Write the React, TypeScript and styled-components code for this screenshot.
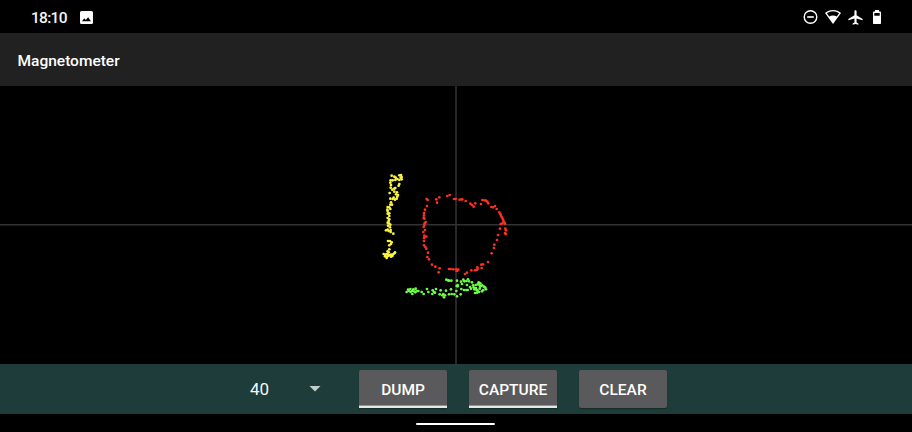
import React from "react";
import styled, { createGlobalStyle } from "styled-components";

const GlobalStyle = createGlobalStyle`
  html, body { margin: 0; padding: 0; background: #000; }
  body { font-family: Roboto, sans-serif; color: #fff; overflow: hidden; }
`;

const Screen = styled.main`
  display: grid;
  grid-template-rows: 33px 53px 278px 50px 18px;
  width: 912px;
  height: 432px;
  background: #000;
`;

const StatusBar = styled.div`
  display: flex;
  align-items: center;
  justify-content: space-between;
  padding: 2px 28px 0 31px;
  box-sizing: border-box;
`;

const StatusLeft = styled.div`
  display: flex;
  align-items: center;
  gap: 13px;
`;

const StatusRight = styled.div`
  display: flex;
  align-items: center;
  gap: 7px;
`;

const Clock = styled.span`
  width: 36px;
  font: 500 15.5px/18px Roboto, sans-serif;
  letter-spacing: -0.7px;
  white-space: nowrap;
  color: #f4f4f4;
`;

const Glyph = styled.svg`
  display: block;
  flex: none;
  fill: #fff;
`;

const AppBar = styled.header`
  display: flex;
  align-items: center;
  padding: 2px 17.5px 0;
  background: #212121;
`;

const Title = styled.h1`
  margin: 0;
  font: 500 15.5px/20px Roboto, sans-serif;
  color: #fff;
`;

const Plot = styled.svg`
  display: block;
  width: 912px;
  height: 278px;
  background: #000;
`;

const Controls = styled.div`
  display: flex;
  align-items: center;
  padding-left: 250px;
  background: #1e3c39;
`;

const Picker = styled.div`
  display: flex;
  align-items: center;
  justify-content: space-between;
  width: 71px;
  margin-right: 38px;
  padding-bottom: 1px;
  font: 400 17px/20px Roboto, sans-serif;
  color: #f5f7f7;
`;

const Actions = styled.div`
  display: flex;
  gap: 22px;
`;

const Action = styled.button<{ $active?: boolean }>`
  width: 88px;
  height: 38px;
  padding: 2px 0 0;
  border: 0;
  border-radius: ${(p) => (p.$active ? "2px 2px 0 0" : "2px")};
  background: #5a595b;
  box-shadow: ${(p) =>
    p.$active
      ? "inset 0 -2px #e2e8e6, inset 0 -3px #929493, 0 1px 1px rgba(0,0,0,.25)"
      : "0 1px 1px rgba(0,0,0,.3)"};
  font: 500 15.5px/20px Roboto, sans-serif;
  color: #fff;
`;

const NavBar = styled.div`
  display: flex;
  padding: 9px 0 0 416px;
`;

const HomeHandle = styled.div`
  width: 79px;
  height: 2px;
  border-radius: 1px;
  background: #fff;
`;

type Patch = { x: number; y: number; points: string };
type Series = { color: string; patches: Patch[] };

// Each patch holds samples in thirds of a pixel, relative to its origin.
const series: Series[] = [
  {
    color: "#fbf63c",
    patches: [
      { x: 375, y: 165, points: "50,32 58,35 62,38 67,42 73,31 78,30 77,38 80,43 80,36 73,45 61,45 47,46 53,46 46,53 48,60 47,68 52,74 58,71 61,69 73,57 71,62 44,84 58,80 66,82 69,90 67,95 65,101 60,104 63,88 53,102 46,101 56,98 48,112 46,119 51,119 38,126 43,127 46,132 37,134 40,146" },
      { x: 375, y: 210, points: "38,3 38,11 43,10 43,18 38,24 43,28 41,33 38,38 42,40 46,44 39,47 45,52 38,59 33,61 41,63 47,60 47,66 55,71 39,93 45,93 50,97 48,102 43,106 43,118 38,124 41,127 26,132 31,134 35,132 38,133 44,135 48,134 54,133 58,130 60,127 30,139 35,140 35,144 40,138 48,140 52,138" },
    ],
  },
  {
    color: "#ff3020",
    patches: [
      { x: 415, y: 185, points: "35,42 38,45 36,63 30,74 27,84 27,91 26,98 28,101 32,111 29,115 28,120 26,126 30,135 25,141 64,43 66,53 73,37 97,33 104,30 117,42 122,42 134,44 141,43" },
      { x: 460, y: 185, points: "6,43 17,48 31,56 36,60 41,65 46,55 63,57 67,45 73,46 78,47 82,50 85,55 94,66 99,67 105,63 110,72 118,82 121,87 123,92 126,97 128,102 130,107 133,112 122,117 127,115 135,116 120,131 136,131 138,136 137,147" },
      { x: 415, y: 230, points: "28,17 34,20 27,24 27,33 27,46 31,51 34,56 39,68 37,81 42,88 51,104 61,110 74,115 71,127 102,117 107,117 115,118 124,118 125,123 130,119 127,121" },
      { x: 460, y: 230, points: "135,9 138,12 114,15 111,30 103,44 102,54 95,70 84,96 64,104 69,103 65,114 52,112 53,117 50,120 45,121 34,121 21,128 15,132" },
    ],
  },
  {
    color: "#6cff45",
    patches: [
      { x: 400, y: 272, points: "20,60 24,53 27,57 31,51 32,60 36,57 37,66 40,52 42,58 47,50 50,57 46,61 55,57 65,60 71,66 81,51 85,60 98,55 102,60 97,66 105,62 108,51 122,55 119,67 127,70 130,66 132,76 135,70 138,56 147,67 139,23 144,25" },
      { x: 445, y: 272, points: "12,26 19,26 36,26 38,39 38,43 35,42 34,57 48,29 51,36 55,23 58,28 64,27 69,22 72,28 66,39 81,31 75,45 84,40 86,46 92,39 93,48 98,37 101,31 103,38 106,34 108,42 105,44 112,40 117,44 121,47 123,52 115,54 111,58 104,50 98,56 94,53 88,52 78,50 64,54 57,54 68,54 49,51 47,67 18,52 20,66 28,67 36,73 90,63 96,62 102,60" },
    ],
  },
];

const toDots = ({ x, y, points }: Patch) =>
  points.split(" ").map((pair) => {
    const [px, py] = pair.split(",").map(Number);
    return { cx: x + px / 3, cy: y + py / 3 };
  });

const actions = [
  { label: "DUMP", active: true },
  { label: "CAPTURE", active: true },
  { label: "CLEAR", active: false },
];

export default function App() {
  return (
    <>
      <GlobalStyle />
      <Screen>
        <StatusBar>
          <StatusLeft>
            <Clock>18:10</Clock>
            <Glyph width="13" height="13" viewBox="0 0 13 13">
              <path
                fillRule="evenodd"
                d="M1.5 0H11.5Q13 0 13 1.5V11.5Q13 13 11.5 13H1.5Q0 13 0 11.5V1.5Q0 0 1.5 0ZM2 10.3H11L8.1 6.3L5.8 9.1L4.2 7.3Z"
              />
            </Glyph>
          </StatusLeft>
          <StatusRight>
            <Glyph width="15" height="15" viewBox="0 0 15 15">
              <circle cx="7.5" cy="7" r="6.3" fill="none" stroke="#fff" strokeWidth="1.4" />
              <rect x="4.2" y="6.2" width="6.6" height="1.6" />
            </Glyph>
            <Glyph width="16" height="15" viewBox="0 0 16 15">
              <path
                fillRule="evenodd"
                d="M8 0C4.9 0 2.1 1.2 0 3.1L8 14L16 3.1C13.9 1.2 11.1 0 8 0ZM8 1.3C10.2 1.3 12.3 2 14.1 3.3L11.8 6.5C10.8 5.9 9.5 5.5 8 5.5S5.2 5.9 4.2 6.5L1.9 3.3C3.7 2 5.8 1.3 8 1.3Z"
              />
            </Glyph>
            <Glyph width="15" height="15" viewBox="1.5 1.5 21 21">
              <path d="M22 16v-2l-8.5-5V3.5c0-.83-.67-1.5-1.5-1.5s-1.5.67-1.5 1.5V9L2 14v2l8.5-2.5V19L8 20.5V22l4-1 4 1v-1.5L13.5 19v-5.5L22 16z" />
            </Glyph>
            <Glyph width="14" height="15" viewBox="0 0 14 15">
              <path
                fillRule="evenodd"
                d="M5 0H9V1.6H10.2Q11 1.6 11 2.4V13.3Q11 14.1 10.2 14.1H3.8Q3 14.1 3 13.3V2.4Q3 1.6 3.8 1.6H5ZM4.3 2.9V5.8H9.7V2.9Z"
              />
            </Glyph>
          </StatusRight>
        </StatusBar>

        <AppBar>
          <Title>Magnetometer</Title>
        </AppBar>

        <Plot viewBox="0 86 912 278">
          <path d="M456 86V364" stroke="#282828" strokeWidth="2" />
          <path d="M0 224.7H912" stroke="#323232" strokeWidth="1.4" />
          {series.map((s) => (
            <g key={s.color} fill={s.color}>
              {s.patches.flatMap(toDots).map((dot, i) => (
                <circle key={i} r="1.35" {...dot} />
              ))}
            </g>
          ))}
        </Plot>

        <Controls>
          <Picker>
            <span>40</span>
            <Glyph width="12" height="6" viewBox="0 0 12 6">
              <path d="M.5 0H11.5L6 5.6Z" fill="#c3cecc" />
            </Glyph>
          </Picker>
          <Actions>
            {actions.map((a) => (
              <Action key={a.label} $active={a.active}>
                {a.label}
              </Action>
            ))}
          </Actions>
        </Controls>

        <NavBar>
          <HomeHandle />
        </NavBar>
      </Screen>
    </>
  );
}
